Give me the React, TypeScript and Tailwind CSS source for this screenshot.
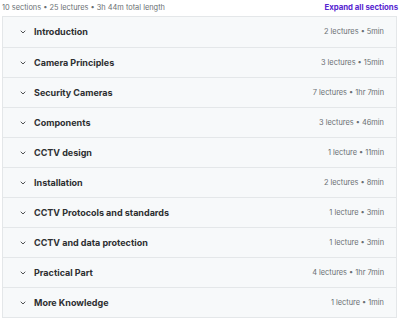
import { ChevronDown } from "lucide-react";

const sections = [
  { title: "Introduction", meta: "2 lectures • 5min" },
  { title: "Camera Principles", meta: "3 lectures • 15min" },
  { title: "Security Cameras", meta: "7 lectures • 1hr 7min" },
  { title: "Components", meta: "3 lectures • 46min" },
  { title: "CCTV design", meta: "1 lecture • 11min" },
  { title: "Installation", meta: "2 lectures • 8min" },
  { title: "CCTV Protocols and standards", meta: "1 lecture • 3min" },
  { title: "CCTV and data protection", meta: "1 lecture • 3min" },
  { title: "Practical Part", meta: "4 lectures • 1hr 7min" },
  { title: "More Knowledge", meta: "1 lecture • 1min" },
];

export default function App() {
  return (
    <div className="w-[400px] h-[320px] bg-white px-[2px] font-['Inter',sans-serif] text-[#2d2f31]">
      <div className="flex items-center justify-between h-[16px]">
        <span className="text-[7.4px] text-[#6a6f73]">10 sections • 25 lectures • 3h 44m total length</span>
        <span className="text-[7.8px] font-bold text-[#5624d0]">Expand all sections</span>
      </div>

      <div className="border border-[#e4e7e9] w-[395px]">
        {sections.map((s, i) => (
          <div
            key={s.title}
            className={
              "flex items-center h-[30px] bg-[#f7f9fa] pl-[16px] pr-[12px] " +
              (i > 0 ? "border-t border-[#e4e7e9]" : "")
            }
          >
            <ChevronDown className="w-[8px] h-[8px] text-[#2d2f31]" strokeWidth={2.5} />
            <span className="ml-[7px] text-[9px] font-bold">{s.title}</span>
            <span className="ml-auto text-[7.4px] text-[#6a6f73]">{s.meta}</span>
          </div>
        ))}
      </div>
    </div>
  );
}
